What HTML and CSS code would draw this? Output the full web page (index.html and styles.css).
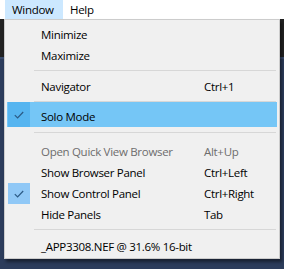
FILE: index.html
```html
<!DOCTYPE html>
<html>
<head>
<meta charset="utf-8">
<link rel="stylesheet" href="styles.css">
</head>
<body>
<div class="menubar">
  <span class="mb-item active">Window</span>
  <span class="mb-item">Help</span>
</div>
<div class="app">
  <div class="toolbar"></div>
  <div class="canvas"></div>
</div>
<div class="menu">
  <div class="item"><span class="check"></span><span class="label">Minimize</span><span class="key"></span></div>
  <div class="item"><span class="check"></span><span class="label">Maximize</span><span class="key"></span></div>
  <div class="sep"></div>
  <div class="item"><span class="check"></span><span class="label">Navigator</span><span class="key">Ctrl+1</span></div>
  <div class="sep"></div>
  <div class="item hl"><span class="check on"><svg width="10" height="8" viewBox="0 0 10 8"><path d="M0.8 4.2 L3.6 7 L9.2 1" fill="none" stroke="#2b5a85" stroke-width="1.2"/></svg></span><span class="label">Solo Mode</span><span class="key"></span></div>
  <div class="sep sep-a"></div>
  <div class="item disabled"><span class="check"></span><span class="label">Open Quick View Browser</span><span class="key">Alt+Up</span></div>
  <div class="item"><span class="check"></span><span class="label">Show Browser Panel</span><span class="key">Ctrl+Left</span></div>
  <div class="item"><span class="check on"><svg width="10" height="8" viewBox="0 0 10 8"><path d="M0.8 4.2 L3.6 7 L9.2 1" fill="none" stroke="#2b5a85" stroke-width="1.2"/></svg></span><span class="label">Show Control Panel</span><span class="key">Ctrl+Right</span></div>
  <div class="item"><span class="check"></span><span class="label">Hide Panels</span><span class="key">Tab</span></div>
  <div class="sep sep-b"></div>
  <div class="item"><span class="check"></span><span class="label">_APP3308.NEF @ 31.6% 16-bit</span><span class="key"></span></div>
</div>
</body>
</html>
```
FILE: styles.css
```css
html, body {
  margin: 0;
  padding: 0;
}
body {
  width: 284px;
  height: 269px;
  overflow: hidden;
  background: #2c3c5b;
  font-family: "Open Sans", "Noto Sans", sans-serif;
  font-size: 11.5px;
  letter-spacing: -0.3px;
  color: #000;
  position: relative;
}
.menubar {
  height: 19px;
  background: #ffffff;
  display: flex;
  padding-left: 5px;
}
.mb-item {
  display: flex;
  align-items: center;
  padding: 0 7px;
  height: 19px;
  line-height: 19px;
}
.mb-item.active {
  background: #cce8ff;
  width: 44px;
}
.app {
  display: flex;
  flex-direction: column;
}
.toolbar {
  height: 38px;
  background: #222222;
  border-bottom: 2px solid #3a4c6c;
}
.canvas {
  flex: 1;
  background: #2c3c5b;
}
.menu {
  position: absolute;
  left: 4px;
  top: 19px;
  width: 270px;
  background: #f0f0f0;
  border: 1px solid #cccccc;
  padding: 4px 2px 1px 2px;
  box-shadow: 2px 3px 3px rgba(0, 0, 0, 0.45);
}
.item {
  display: flex;
  align-items: center;
  height: 21px;
}
.item.hl {
  background: #75c6f6;
  height: 25px;
  margin-top: -5px;
  padding-top: 4px;
  box-sizing: border-box;
}
.check {
  width: 22px;
  height: 21px;
  margin-left: 1px;
  display: flex;
  align-items: center;
  justify-content: center;
}
.hl .check {
  height: 25px;
  margin-top: -4px;
}
.check.on {
  background: #90c8f6;
}
.hl .check.on {
  background: #56b5f0;
}
.label {
  margin-left: 11px;
  width: 163px;
  white-space: nowrap;
}
.key {
  white-space: nowrap;
}
.disabled {
  color: #6d6d6d;
}
.sep {
  height: 1px;
  background: #d7d7d7;
  margin: 4px 1px 5px 27px;
}
.sep-a {
  margin-top: 5px;
  margin-bottom: 8px;
}
.sep-b {
  margin-bottom: 6px;
}
```
